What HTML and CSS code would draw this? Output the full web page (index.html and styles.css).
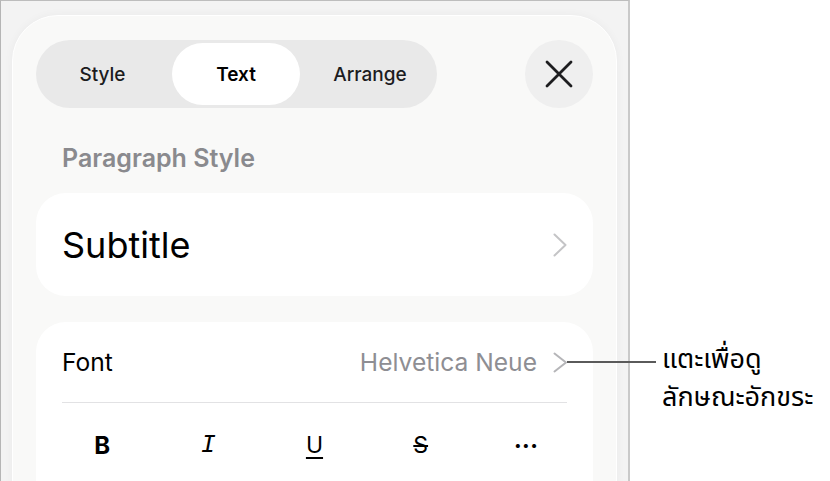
FILE: index.html
```html
<!DOCTYPE html>
<html lang="th">
<head>
<meta charset="utf-8">
<title>Text format</title>
<link rel="stylesheet" href="styles.css">
</head>
<body>
<div class="frame">
  <div class="panel">
    <div class="toprow">
      <div class="segmented">
        <div class="seg first">Style</div>
        <div class="seg active">Text</div>
        <div class="seg last">Arrange</div>
      </div>
      <div class="close">
        <svg width="28" height="28" viewBox="0 0 28 28"><path d="M2 2 L26 26 M26 2 L2 26" stroke="#1d1d1f" stroke-width="2.8" stroke-linecap="round" fill="none"/></svg>
      </div>
    </div>
    <div class="label">Paragraph Style</div>
    <div class="card stylecard">
      <span class="subtitle">Subtitle</span>
      <svg class="chev" width="14" height="24" viewBox="0 0 14 24"><path d="M1.5 1.5 L12.5 12 L1.5 22.5" stroke="#c4c4c6" stroke-width="2" fill="none" stroke-linecap="round" stroke-linejoin="round"/></svg>
    </div>
    <div class="card fontcard">
      <div class="fontrow">
        <span class="fontlabel">Font</span>
        <span class="fontval">Helvetica Neue
          <svg class="chev2" width="15" height="21" viewBox="0 0 15 21"><path d="M1.5 1.5 L13 10.5 L1.5 19.5" stroke="#b5b5b8" stroke-width="2" fill="none" stroke-linecap="round" stroke-linejoin="round"/></svg>
        </span>
      </div>
      <div class="divider"></div>
      <div class="btnrow">
        <span class="b">B</span>
        <span class="i">I</span>
        <span class="u">U</span>
        <span class="s">S</span>
        <span class="more">•••</span>
      </div>
    </div>
  </div>
</div>
<div class="callout-line"></div>
<div class="callout">
  <div class="cl">แตะเพื่อดู</div>
  <div class="cl">ลักษณะอักขระ</div>
</div>
</body>
</html>
```
FILE: styles.css
```css
html, body {
  margin: 0;
  padding: 0;
  background: #ffffff;
  font-family: "Inter", "Noto Sans", sans-serif;
  color: #000;
}
.frame {
  box-sizing: border-box;
  width: 630px;
  height: 481px;
  border-top: 1px solid #bdbdbd;
  border-left: 1px solid #b5b5b5;
  border-right: 2px solid #c9c9c9;
  background: #f3f3f3;
  overflow: hidden;
  padding: 14px 11px 0 11px;
}
.panel {
  box-sizing: border-box;
  height: 510px;
  border: 1px solid #ffffff;
  border-radius: 46px;
  background: #f9f9f8;
  box-shadow: 0 0 10px rgba(0,0,0,0.04);
  padding: 24px 23px 0 23px;
}
.toprow {
  display: flex;
  justify-content: space-between;
  align-items: center;
}
.segmented {
  display: grid;
  grid-template-columns: 133px 128px 134px;
  padding: 3px;
  background: #e9e9e9;
  border-radius: 34px;
}
.seg {
  height: 62px;
  display: flex;
  align-items: center;
  justify-content: center;
  font-size: 19px;
  font-weight: 500;
  color: #1c1c1e;
  border-radius: 31px;
}
.seg.first { padding-right: 6px; }
.seg.last { padding-left: 6px; }
.seg.active {
  background: #ffffff;
  font-weight: 600;
  color: #000;
}
.close {
  width: 68px;
  height: 68px;
  border-radius: 50%;
  background: #efefef;
  display: flex;
  align-items: center;
  justify-content: center;
}
.label {
  margin: 36px 0 0 26px;
  font-size: 25px;
  line-height: 29px;
  font-weight: 600;
  color: #8a8a8e;
}
.card {
  background: #ffffff;
  border-radius: 30px;
}
.stylecard {
  margin-top: 20px;
  height: 103px;
  display: flex;
  align-items: center;
  justify-content: space-between;
  padding: 0 26px 0 26px;
}
.subtitle {
  font-size: 36px;
  font-weight: 400;
  color: #000;
}
.fontcard {
  margin-top: 26px;
  padding: 0 26px;
  height: 200px;
}
.fontrow {
  height: 80px;
  display: flex;
  align-items: center;
  justify-content: space-between;
}
.fontlabel {
  font-size: 24.6px;
  color: #000;
}
.fontval {
  font-size: 24.6px;
  color: #8e8e93;
  display: flex;
  align-items: center;
  gap: 16px;
}
.chev2 { margin-right: -1px; }
.divider {
  height: 1px;
  background: #e2e2e4;
}
.btnrow {
  height: 84px;
  margin: 0 -13px;
  display: grid;
  grid-template-columns: repeat(5, 1fr);
  align-items: center;
  justify-items: center;
  font-size: 23px;
  color: #000;
}
.b { font-weight: 700; font-size: 24px; }
.i {
  font-family: "Liberation Mono", monospace;
  font-style: italic;
  font-size: 25px;
}
.u {
  text-decoration: underline;
  text-underline-offset: 4px;
  text-decoration-thickness: 1.5px;
}
.s {
  text-decoration: line-through;
  text-decoration-thickness: 1.5px;
}
.more {
  font-size: 13px;
  letter-spacing: 2px;
  font-weight: 700;
}
.callout-line {
  position: absolute;
  left: 567px;
  top: 361px;
  width: 89px;
  height: 2px;
  background: #5a5a5a;
}
.callout {
  position: absolute;
  left: 662px;
  top: 341px;
  font-family: "Noto Sans Thai", "Noto Sans Thai UI", "Inter", sans-serif;
  font-size: 27px;
  color: #000;
  display: flex;
  flex-direction: column;
}
.cl {
  line-height: 38px;
  white-space: nowrap;
}
```
